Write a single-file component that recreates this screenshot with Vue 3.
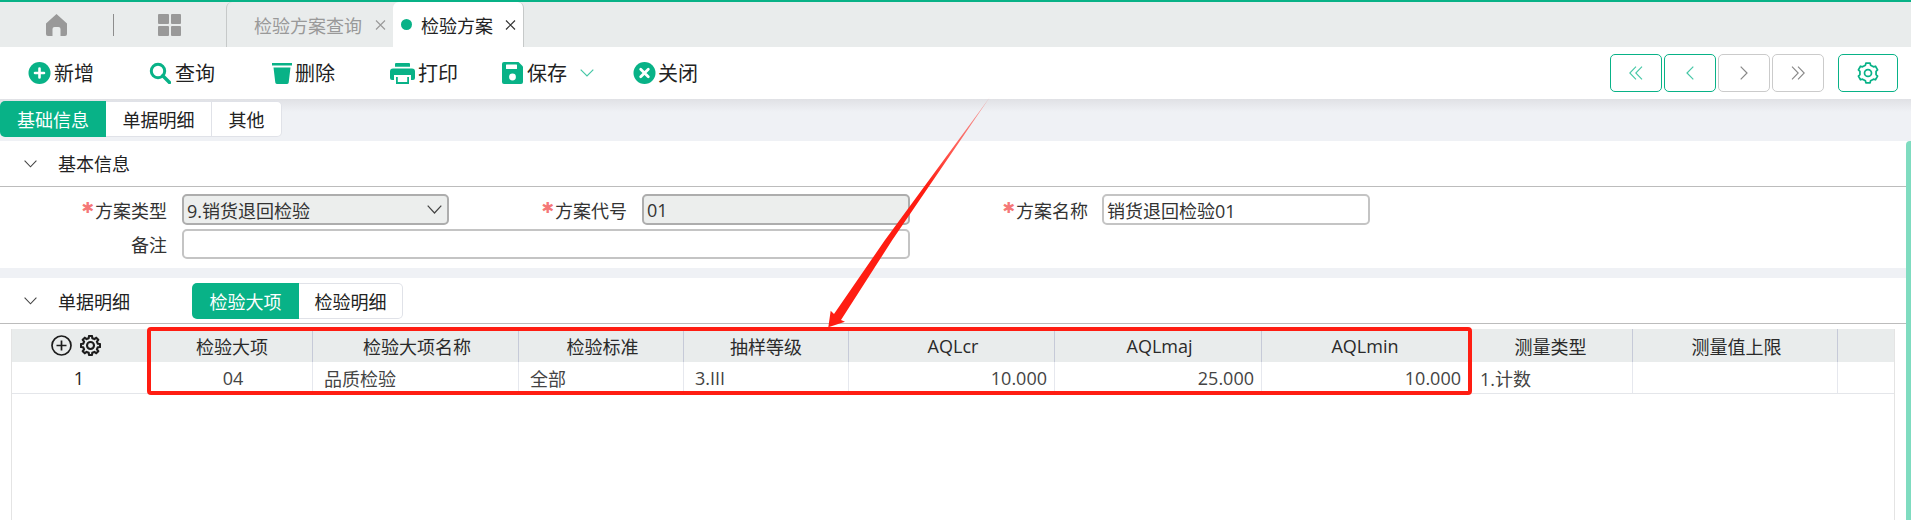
<script setup>
function gearPath(teeth, rOut, rIn, cx = 12, cy = 12) {
  const step = (Math.PI * 2) / teeth
  const pts = []
  for (let i = 0; i < teeth; i++) {
    const a = i * step - Math.PI / 2
    const w = step * 0.2
    const g = step * 0.3
    pts.push([cx + rIn * Math.cos(a - g), cy + rIn * Math.sin(a - g)])
    pts.push([cx + rOut * Math.cos(a - w), cy + rOut * Math.sin(a - w)])
    pts.push([cx + rOut * Math.cos(a + w), cy + rOut * Math.sin(a + w)])
    pts.push([cx + rIn * Math.cos(a + g), cy + rIn * Math.sin(a + g)])
  }
  return 'M' + pts.map((p) => p[0].toFixed(2) + ' ' + p[1].toFixed(2)).join('L') + 'Z'
}
const tableGear = gearPath(8, 11, 8.6)
const btnGear = gearPath(6, 11, 9)

const columns = [
  { key: 'tools', width: 142 },
  { key: 'a', width: 159, head: '检验大项', text: '04', align: 'center', pull: true },
  { key: 'b', width: 206, head: '检验大项名称', text: '品质检验', align: 'left', nudge: true },
  { key: 'c', width: 165, head: '检验标准', text: '全部', align: 'left', nudge: true },
  { key: 'd', width: 165, head: '抽样等级', text: '3.III', align: 'left' },
  { key: 'e', width: 206, head: 'AQLcr', text: '10.000', align: 'right', nudge: true },
  { key: 'f', width: 207, head: 'AQLmaj', text: '25.000', align: 'right', nudge: true },
  { key: 'g', width: 207, head: 'AQLmin', text: '10.000', align: 'right' },
  { key: 'h', width: 164, head: '测量类型', text: '1.计数', align: 'left' },
  { key: 'i', width: 205, head: '测量值上限', text: '', align: 'left', nudge: true },
  { key: 'j', width: 56, head: '', text: '', align: 'left' }
]
const gridColumns = columns.map((c) => c.width + 'px').join(' ')
</script>

<template>
  <div class="page">
    <header class="tabbar">
      <div class="nav-icons">
        <svg class="home" width="21" height="22" viewBox="0 0 21 22">
          <path d="M10.5 0 21 9.5V20a2 2 0 0 1-2 2h-4.500v-7a2 2 0 0 0-2-2h-4a2 2 0 0 0-2 2v7H2a2 2 0 0 1-2-2V9.500z" fill="#999" />
        </svg>
        <i class="nav-line"></i>
        <div class="grid-icon"><i></i><i></i><i></i><i></i></div>
      </div>
      <div class="tab">
        <span>检验方案查询</span>
        <svg class="x" width="11" height="10" viewBox="0 0 11 10"><path d="M1 .5l9 9M10 .5l-9 9" stroke="#999" fill="none" stroke-width="1.100" /></svg>
      </div>
      <div class="tab active">
        <i class="dot"></i>
        <span>检验方案</span>
        <svg class="x" width="11" height="10" viewBox="0 0 11 10"><path d="M1 .5l9 9M10 .5l-9 9" stroke="#333" fill="none" stroke-width="1.200" /></svg>
      </div>
    </header>

    <nav class="toolbar">
      <div class="tool t-new">
        <svg width="23" height="22" viewBox="0 0 23 22"><circle cx="11.500" cy="11" r="11" fill="#08b287" /><path d="M11.500 6.500v9M7 11h9" stroke="#fff" stroke-width="2.600" stroke-linecap="round" /></svg>
        <span>新增</span>
      </div>
      <div class="tool t-search">
        <svg width="22" height="22" viewBox="0 0 22 22"><circle cx="9" cy="9" r="6.700" fill="none" stroke="#08b287" stroke-width="3" /><path d="M13.800 13.800 20.500 20.500" stroke="#08b287" stroke-width="3.400" stroke-linecap="round" /></svg>
        <span>查询</span>
      </div>
      <div class="tool t-del">
        <svg width="20" height="22" viewBox="0 0 20 22"><path d="M0 1h20v2.500H0z" fill="#08b287" /><path d="M1.500 5.500h17l-1.800 15a1.600 1.600 0 0 1-1.600 1.500H4.900a1.600 1.600 0 0 1-1.600-1.500z" fill="#08b287" /></svg>
        <span>删除</span>
      </div>
      <div class="tool t-print">
        <svg width="25" height="21" viewBox="0 0 25 21"><path d="M6 0h13a1 1 0 0 1 1 1v2.800H5V1a1 1 0 0 1 1-1z" fill="#08b287" /><path d="M3 5.500h19a3 3 0 0 1 3 3V15a2 2 0 0 1-2 2h-2v-5H4v5H2a2 2 0 0 1-2-2V8.500a3 3 0 0 1 3-3z" fill="#08b287" /><path d="M6 14h13v7H6z" fill="#08b287" /><path d="M7.800 13.500h9.400v5.500H7.800z" fill="#fff" /></svg>
        <span>打印</span>
      </div>
      <div class="tool t-save">
        <svg width="21" height="22" viewBox="0 0 21 22"><path d="M2 0h14.500L21 4.500V20a2 2 0 0 1-2 2H2a2 2 0 0 1-2-2V2a2 2 0 0 1 2-2z" fill="#08b287" /><rect x="4" y="2.500" width="11" height="4.500" fill="#fff" rx=".5" /><circle cx="10.500" cy="15" r="3.400" fill="#fff" /></svg>
        <span>保存</span>
      </div>
      <svg class="t-more" width="14" height="8" viewBox="0 0 14 8"><path d="M.7.700 7 7 13.300.7" fill="none" stroke="#45c7a6" stroke-width="1.200" /></svg>
      <div class="tool t-close">
        <svg width="23" height="22" viewBox="0 0 23 22"><circle cx="11.500" cy="11" r="11" fill="#08b287" /><path d="M7.700 7.200l7.600 7.600M15.300 7.200l-7.600 7.600" stroke="#fff" stroke-width="2.800" stroke-linecap="round" /></svg>
        <span>关闭</span>
      </div>
      <div class="pager">
        <button class="pg on"><svg width="14" height="14" viewBox="0 0 14 14"><path d="M7 .7.800 7 7 13.300M13 .7 6.800 7 13 13.300" fill="none" stroke="#45c7a6" stroke-width="1.100" /></svg></button>
        <button class="pg on"><svg width="8" height="14" viewBox="0 0 8 14"><path d="M7.300.7 1 7l6.300 6.300" fill="none" stroke="#45c7a6" stroke-width="1.200" /></svg></button>
        <button class="pg"><svg width="8" height="14" viewBox="0 0 8 14"><path d="M.7.7 7 7 .7 13.300" fill="none" stroke="#888" stroke-width="1.200" /></svg></button>
        <button class="pg"><svg width="14" height="14" viewBox="0 0 14 14"><path d="M1 .7 7.200 7 1 13.300M7 .7 13.200 7 7 13.300" fill="none" stroke="#888" stroke-width="1.100" /></svg></button>
        <button class="pg on setting">
          <svg width="22" height="22" viewBox="0 0 24 24"><path :d="btnGear" fill="none" stroke="#08b287" stroke-width="1.900" stroke-linejoin="round" /><circle cx="12" cy="12" r="3.800" fill="none" stroke="#08b287" stroke-width="1.900" /></svg>
        </button>
      </div>
    </nav>

    <div class="seg-row">
      <div class="seg">
        <span class="seg-item selected">基础信息</span>
        <span class="seg-item">单据明细</span>
        <span class="seg-item last">其他</span>
      </div>
    </div>

    <section class="panel">
      <div class="panel-head first-head">
        <svg class="chev" width="13" height="8" viewBox="0 0 13 8"><path d="M.6.700 6.500 6.800 12.400.7" fill="none" stroke="#444" stroke-width="1.100" /></svg>
        <span>基本信息</span>
      </div>
      <div class="form">
        <label class="lbl"><b class="req">✱</b>方案类型</label>
        <div class="field filled select">
          <span>9.销货退回检验</span>
          <svg width="15" height="9" viewBox="0 0 15 9"><path d="M.7.700 7.500 8 14.300.7" fill="none" stroke="#444" stroke-width="1.200" /></svg>
        </div>
        <label class="lbl"><b class="req">✱</b>方案代号</label>
        <div class="field filled">01</div>
        <label class="lbl"><b class="req">✱</b>方案名称</label>
        <div class="field name">销货退回检验01</div>
        <label class="lbl">备注</label>
        <div class="field wide"></div>
      </div>
    </section>

    <section class="panel second">
      <div class="panel-head">
        <svg class="chev" width="13" height="8" viewBox="0 0 13 8"><path d="M.6.700 6.500 6.800 12.400.7" fill="none" stroke="#444" stroke-width="1.100" /></svg>
        <span>单据明细</span>
        <div class="seg inner">
          <span class="seg-item selected">检验大项</span>
          <span class="seg-item last">检验明细</span>
        </div>
      </div>
      <div class="table-wrap">
        <div class="table">
          <div class="tr th" :style="{ gridTemplateColumns: gridColumns }">
            <div v-for="c in columns" :key="c.key" class="cell head" :class="{ tools: c.key === 'tools', nudge: c.nudge, pull: c.pull }">
              <template v-if="c.key === 'tools'">
                <svg width="21" height="21" viewBox="0 0 21 21"><circle cx="10.500" cy="10.500" r="9.500" fill="none" stroke="#1c1c1c" stroke-width="1.700" /><path d="M10.500 5.500v10M5.500 10.500h10" stroke="#1c1c1c" stroke-width="1.700" /></svg>
                <svg width="21" height="21" viewBox="0 0 24 24"><path :d="tableGear" fill="none" stroke="#1c1c1c" stroke-width="2.400" stroke-linejoin="round" /><circle cx="12" cy="12" r="4" fill="none" stroke="#1c1c1c" stroke-width="2.400" /></svg>
              </template>
              <template v-else>{{ c.head }}</template>
            </div>
          </div>
          <div class="tr td" :style="{ gridTemplateColumns: gridColumns }">
            <div v-for="c in columns" :key="c.key" class="cell body" :class="'al-' + (c.align || 'idx')">
              {{ c.key === 'tools' ? '1' : c.text }}
            </div>
          </div>
        </div>
      </div>
    </section>

    <i class="scrollbar"></i>

    <svg class="annot" width="1911" height="520" viewBox="0 0 1911 520">
      <defs>
        <linearGradient id="tail" gradientUnits="userSpaceOnUse" x1="990" y1="97" x2="930" y2="190">
          <stop offset="0" stop-color="#ff1d12" stop-opacity=".35" />
          <stop offset="1" stop-color="#ff1d12" />
        </linearGradient>
      </defs>
      <rect x="149" y="329" width="1321" height="64" rx="2" fill="none" stroke="#ff1d12" stroke-width="4" />
      <path d="M990 97 892.300 240 841 320 845 321.700 828.300 327.300 830.700 310.700 834 314 885 240Z" fill="url(#tail)" />
    </svg>
  </div>
</template>

<style>
html, body { margin: 0; padding: 0; background: #fff; }
</style>

<style scoped>
.page {
  position: relative;
  width: 1911px;
  height: 520px;
  overflow: hidden;
  background: #fff;
  font-family: "Open Sans", "Noto Sans CJK SC", sans-serif;
  font-size: 18px;
  color: #222;
}
.page i { display: block; font-style: normal; }

.tabbar {
  display: flex;
  height: 45px;
  border-top: 2px solid #08b287;
  background: #e9ecec;
}
.nav-icons { display: flex; align-items: center; width: 226px; padding-left: 46px; box-sizing: border-box; }
.home { flex: none; }
.nav-line { width: 1px; height: 22px; background: #8d8d8d; margin-left: 46px; }
.grid-icon {
  display: grid;
  grid-template-columns: 10.500px 10.500px;
  grid-template-rows: 10px 10px;
  gap: 2px;
  margin-left: 44px;
}
.grid-icon i { background: #999; border-radius: 1px; }
.tab {
  display: flex;
  align-items: center;
  width: 167px;
  box-sizing: border-box;
  padding-left: 27px;
  border-left: 1px solid #c6c9c9;
  border-top-left-radius: 6px;
  color: #999;
}
.tab .x { margin-left: 13px; }
.tab.active {
  width: 131px;
  padding-left: 8px;
  background: #fff;
  color: #222;
  border-left: none;
  border-right: 1px solid #c6c9c9;
  border-radius: 6px 6px 0 0;
}
.tab.active .x { margin-left: 12px; }
.dot { width: 11px; height: 11px; border-radius: 50%; background: #08b287; margin-right: 9px; }

.toolbar {
  display: flex;
  align-items: center;
  height: 52px;
  padding: 0 13px 0 28px;
  background: #fff;
  font-size: 20px;
}
.tool { display: flex; align-items: center; gap: 2px; line-height: 24px; }
.tool span { padding-top: 2px; }
.t-new { gap: 3px; }
.t-search { margin-left: 55px; gap: 4px; }
.t-del { margin-left: 57px; gap: 3px; }
.t-print { margin-left: 55px; gap: 3px; }
.t-save { margin-left: 44px; gap: 4px; }
.t-more { margin-left: 13px; }
.t-close { margin-left: 39px; gap: 2px; }
.pager { display: flex; margin-left: auto; gap: 2px; }
.pg {
  display: flex;
  align-items: center;
  justify-content: center;
  width: 52px;
  height: 38px;
  padding: 0;
  box-sizing: border-box;
  background: #fff;
  border: 1px solid #cbcbcb;
  border-radius: 5px;
}
.pg.on { border-color: #08b287; }
.setting { width: 60px; margin-left: 12px; }

.seg-row {
  height: 42px;
  box-sizing: border-box;
  padding-top: 2px;
  background: linear-gradient(#e0e1e5, #eff1f5 13px);
}
.seg { display: inline-flex; height: 36px; vertical-align: top; }
.seg-item {
  display: flex;
  align-items: center;
  justify-content: center;
  width: 106px;
  box-sizing: border-box;
  background: #fff;
  border: 1px solid #e0e2e8;
  border-left: none;
  color: #222;
}
.seg-item.selected { background: #08b287; color: #fff; border: none; border-radius: 5px 0 0 5px; }
.seg-item.last { width: 70px; border-radius: 0 5px 5px 0; }

.panel { background: #fff; }
.panel-head {
  display: flex;
  align-items: center;
  height: 45px;
  box-sizing: content-box;
  padding-left: 24px;
  border-bottom: 1px solid #bcbcbc;
}
.panel-head > span { margin-left: 21px; }
.first-head > span { padding-bottom: 2px; }
.form {
  display: grid;
  grid-template-columns: 167px 267px 163px 268px 163px 267px;
  grid-template-rows: 31px 30px;
  column-gap: 15px;
  row-gap: 4px;
  padding: 7px 0 9px;
}
.second { border-top: 10px solid #eff1f5; }
.lbl { display: flex; align-items: center; justify-content: flex-end; color: #333; }
.req {
  font-family: "DejaVu Sans", sans-serif;
  font-size: 15px;
  font-weight: 400;
  line-height: 18px;
  height: 22px;
  color: #f57878;
  margin-right: 1px;
}
.field {
  display: flex;
  align-items: center;
  box-sizing: border-box;
  padding-left: 3px;
  border: 2px solid #c4c4c4;
  border-radius: 5px;
  color: #333;
}
.filled { background: #eceeed; border-color: #adadad; }
.select { justify-content: space-between; padding-right: 5px; }
.name { margin-left: -1px; }
.wide { grid-column: 2 / span 3; }

.panel-head .seg { margin-left: 62px; }
.seg.inner .seg-item { width: 104px; }
.seg.inner .seg-item.selected { width: 107px; }

.table-wrap { padding: 5px 16px 0 11px; }
.table {
  height: 197px;
  box-sizing: border-box;
  border-left: 1px solid #e4e4e4;
  border-right: 1px solid #e4e4e4;
}
.tr { display: grid; }
.th { height: 33px; background: #e9ecec; }
.td { height: 32px; border-bottom: 1px solid #e4e6ea; box-sizing: border-box; }
.cell {
  display: flex;
  align-items: center;
  min-width: 0;
  box-sizing: border-box;
  border-right: 1px solid #e6e8ee;
}
.cell:last-child { border-right: none; }
.head { justify-content: center; border-right-color: #c6cad8; color: #2a2a2a; }
.head.nudge { padding-left: 3px; }
.head.pull { padding-right: 2px; }
.head.tools { justify-content: flex-start; padding-left: 39px; gap: 8px; border-right: none; }
.body { color: #444; }
.al-idx { justify-content: center; padding-right: 8px; border-right: none; color: #222; }
.al-center { justify-content: center; }
.al-left { padding-left: 11px; }
.al-right { justify-content: flex-end; padding-right: 7px; }

.scrollbar {
  position: absolute;
  left: 1906px;
  top: 141px;
  width: 5px;
  bottom: 0;
  background: #7fdcc0;
  border-top-left-radius: 4px;
}
.annot { position: absolute; left: 0; top: 0; pointer-events: none; }
</style>
